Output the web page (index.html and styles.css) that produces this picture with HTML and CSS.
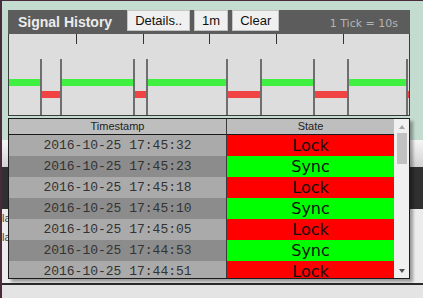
FILE: index.html
```html
<!DOCTYPE html>
<html lang="en">
  <head>
    <meta charset="UTF-8" />
    <meta name="viewport" content="width=device-width, initial-scale=1.0" />
    <title>Signal History</title>
    <link rel="stylesheet" href="styles.css">
  </head>
  <body>
    <div class="backdrop">
      <div class="page-body">
        <div class="page-top"></div>
        <div class="page-band"></div>
        <div class="page-rows">
          <p>la</p>
          <p>la</p>
        </div>
      </div>
      <div class="page-foot"></div>
    </div>

    <div class="signal-panel">
      <div class="panel-head">
        <span class="panel-title">Signal History</span>
        <div class="panel-tools">
          <button class="btn">Details..</button>
          <button class="btn">1m</button>
          <button class="btn">Clear</button>
        </div>
        <span class="tick-label">1 Tick = 10s</span>
      </div>

      <div class="chart">
        <svg width="400" height="81" viewBox="0 0 400 81">
          <!-- tick marks -->
          <g stroke="#333" stroke-width="1">
            <line x1="67.5" y1="0" x2="67.5" y2="10" />
            <line x1="134.5" y1="0" x2="134.5" y2="10" />
            <line x1="200.5" y1="0" x2="200.5" y2="10" />
            <line x1="267.5" y1="0" x2="267.5" y2="10" />
            <line x1="334.5" y1="0" x2="334.5" y2="10" />
          </g>
          <!-- sync (green) / lock (red) levels -->
          <g fill="#40f040">
            <rect x="0" y="45" width="32" height="7" />
            <rect x="52" y="45" width="73" height="7" />
            <rect x="138" y="45" width="80" height="7" />
            <rect x="252" y="45" width="53" height="7" />
            <rect x="339" y="45" width="59" height="7" />
          </g>
          <g fill="#f04444">
            <rect x="32" y="57" width="20" height="7" />
            <rect x="125" y="57" width="13" height="7" />
            <rect x="218" y="57" width="34" height="7" />
            <rect x="305" y="57" width="34" height="7" />
            <rect x="398" y="57" width="2" height="7" />
          </g>
          <!-- transitions -->
          <g fill="#6e6e6e">
            <rect x="31" y="25" width="2" height="56" />
            <rect x="51" y="25" width="2" height="56" />
            <rect x="124" y="25" width="2" height="56" />
            <rect x="137" y="25" width="2" height="56" />
            <rect x="217" y="25" width="2" height="56" />
            <rect x="251" y="25" width="2" height="56" />
            <rect x="304" y="25" width="2" height="56" />
            <rect x="338" y="25" width="2" height="56" />
            <rect x="397" y="25" width="2" height="56" />
          </g>
        </svg>
      </div>

      <div class="history">
        <div class="history-table">
          <table>
            <colgroup>
              <col class="col-time" />
              <col />
            </colgroup>
            <thead>
              <tr>
                <th>Timestamp</th>
                <th class="state">State</th>
              </tr>
            </thead>
            <tbody>
              <tr><td class="time">2016-10-25 17:45:32</td><td class="state lock">Lock</td></tr>
              <tr><td class="time">2016-10-25 17:45:23</td><td class="state sync">Sync</td></tr>
              <tr><td class="time">2016-10-25 17:45:18</td><td class="state lock">Lock</td></tr>
              <tr><td class="time">2016-10-25 17:45:10</td><td class="state sync">Sync</td></tr>
              <tr><td class="time">2016-10-25 17:45:05</td><td class="state lock">Lock</td></tr>
              <tr><td class="time">2016-10-25 17:44:53</td><td class="state sync">Sync</td></tr>
              <tr><td class="time">2016-10-25 17:44:51</td><td class="state lock">Lock</td></tr>
            </tbody>
          </table>
        </div>
        <div class="scrollbar">
          <span class="scroll-up"></span>
          <span class="scroll-thumb"></span>
          <span class="scroll-down"></span>
        </div>
      </div>
    </div>
  </body>
</html>
```

FILE: styles.css
```css
body {
  margin: 0;
  font-family: "Liberation Sans", Arial, sans-serif;
}
/* page that sits behind the popup */
.backdrop {
  height: 298px;
  box-sizing: border-box;
  border-top: 1px solid #4a2b3b;
  border-left: 2px solid #4a2b3b;
  background-color: #c4dbcf;
  display: flex;
  flex-direction: column;
  overflow: hidden;
}
.page-body {
  margin-top: 139px;
  flex: 1;
  display: flex;
  flex-direction: column;
}
.page-top {
  height: 27px;
  background: linear-gradient(#f6f6f6, #d2d2d2);
}
.page-band {
  height: 42px;
  background-color: #303030;
}
.page-rows {
  flex: 1;
  background-color: #ececec;
  font-size: 11px;
  color: #444;
}
.page-rows p {
  margin: 0;
  line-height: 19px;
}
.page-foot {
  height: 13px;
  border-top: 2px solid #2a2a2a;
  background-color: #e4e4e4;
}

/* popup */
.signal-panel {
  position: absolute;
  top: 10px;
  left: 8px;
  width: 402px;
}
.panel-head {
  height: 24px;
  background-color: #5c5c5c;
  display: flex;
  align-items: flex-start;
}
.panel-title {
  padding-left: 10px;
  margin-right: 15px;
  line-height: 24px;
  font-size: 14px;
  font-weight: bold;
  color: #ececec;
}
.panel-tools {
  display: flex;
  gap: 4px;
}
.btn {
  height: 21px;
  box-sizing: border-box;
  padding: 0 7px;
  border: 1px solid #c4c4c4;
  background-color: #f0f0f0;
  font-family: "Liberation Sans", Arial, sans-serif;
  font-size: 13px;
  color: #111;
  cursor: pointer;
}
.tick-label {
  margin-left: auto;
  padding: 2px 12px 0 0;
  line-height: 24px;
  font-family: "DejaVu Sans", Verdana, sans-serif;
  font-size: 11px;
  color: #b4b4b4;
}
.chart {
  height: 81px;
  background-color: #dddddd;
  border: 1px solid #3c3c3c;
  border-top: 0;
}
.chart svg {
  display: block;
}

.history {
  margin-top: 2px;
  height: 161px;
  box-sizing: border-box;
  border: 1px solid #1c1c1c;
  background-color: #f0f0f0;
  display: flex;
  box-shadow: 3px 3px 3px rgba(0, 0, 0, 0.35);
}
.history-table {
  flex: 1;
  overflow: hidden;
}
table {
  width: 100%;
  table-layout: fixed;
  border-collapse: separate;
  border-spacing: 0;
}
.col-time {
  width: 217px;
}
th {
  height: 15px;
  padding: 0;
  line-height: 15px;
  background-color: #bebebe;
  border-bottom: 1px solid #1a1a1a;
  font-size: 11px;
  font-weight: normal;
  color: #222;
}
td {
  height: 21px;
  padding: 0;
  line-height: 21px;
  text-align: center;
}
.state {
  border-left: 1px solid #3a3a3a;
}
.time {
  font-family: "Liberation Mono", "Courier New", monospace;
  font-size: 13px;
  color: #333;
  background-color: #aaaaaa;
}
tbody tr:nth-child(even) .time {
  background-color: #8c8c8c;
}
td.state {
  font-family: "DejaVu Sans", Verdana, sans-serif;
  font-size: 16px;
  color: #111;
}
.lock {
  background-color: #ff0000;
}
.sync {
  background-color: #00ff00;
}

.scrollbar {
  width: 15px;
  background-color: #f0f0f0;
  display: flex;
  flex-direction: column;
  align-items: center;
}
.scroll-up {
  margin-top: 6px;
  border-left: 3.5px solid transparent;
  border-right: 3.5px solid transparent;
  border-bottom: 4px solid #a3a3a3;
}
.scroll-thumb {
  margin-top: 4px;
  width: 10px;
  height: 31px;
  background-color: #c1c1c1;
}
.scroll-down {
  margin-top: auto;
  margin-bottom: 5px;
  border-left: 3.5px solid transparent;
  border-right: 3.5px solid transparent;
  border-top: 4px solid #505050;
}
```
